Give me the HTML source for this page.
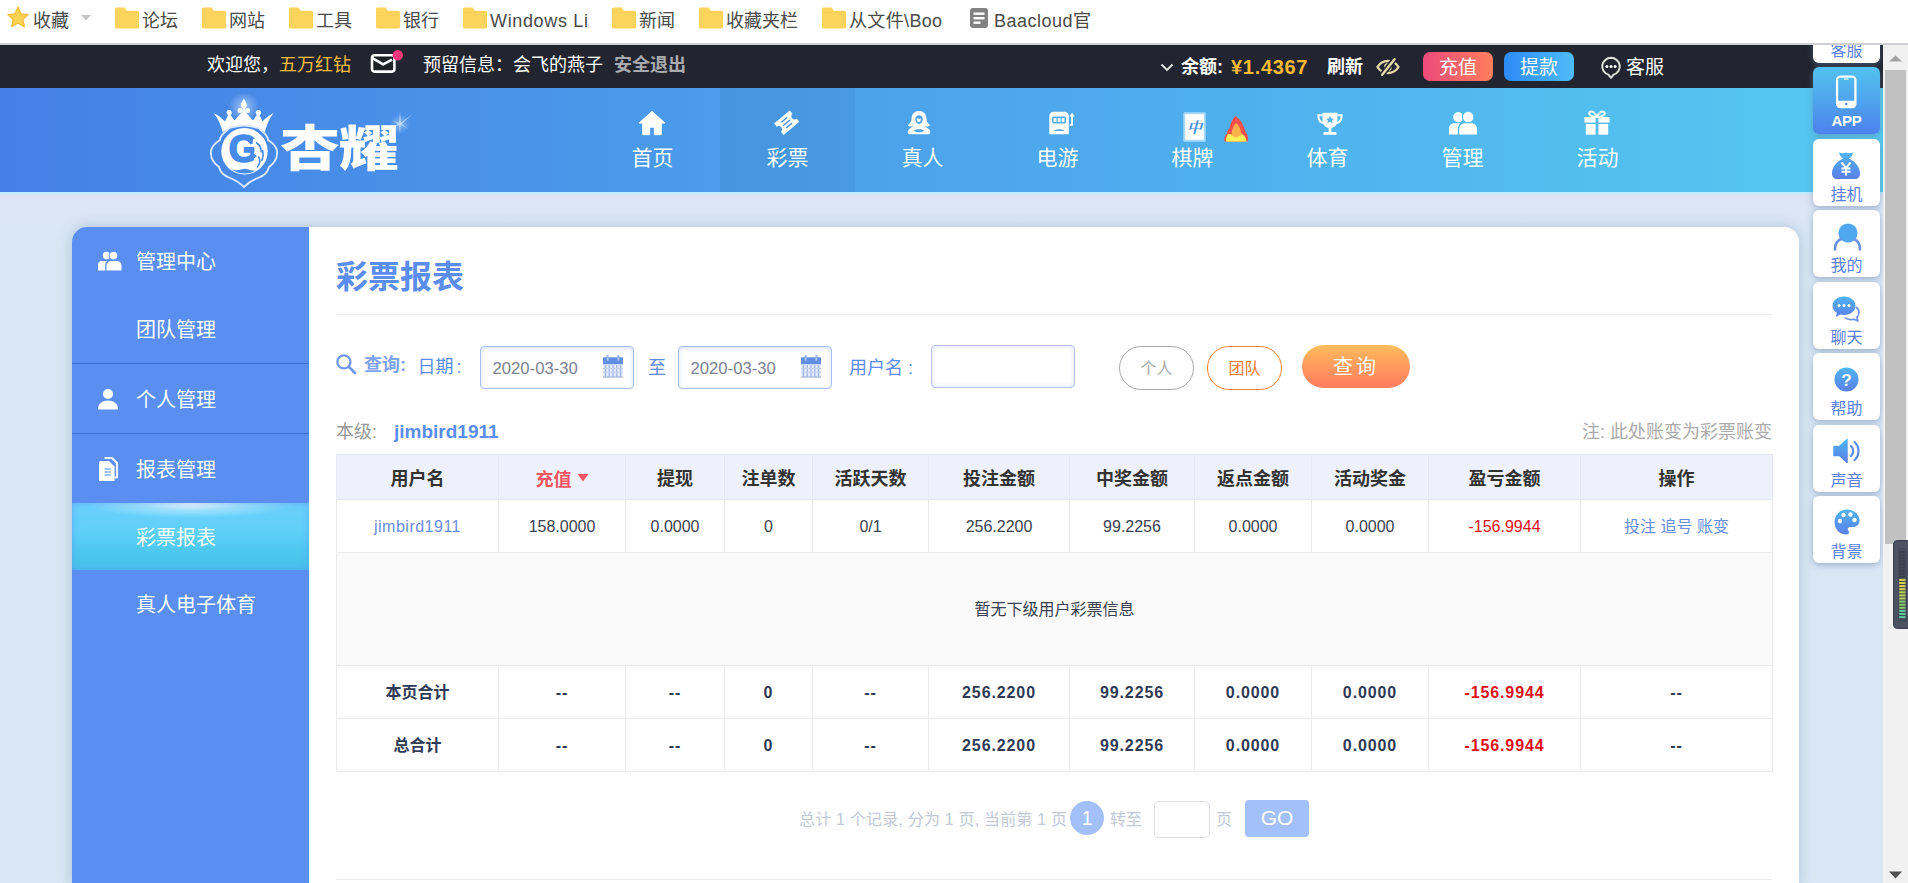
<!DOCTYPE html>
<html lang="zh-CN">
<head>
<meta charset="utf-8">
<title>彩票报表</title>
<style>
*{box-sizing:border-box;margin:0;padding:0}
html,body{width:1908px;height:883px;overflow:hidden}
body{position:relative;background:#d9e7f5;font-family:"Liberation Sans","Noto Sans CJK SC",sans-serif;color:#333;font-size:16px}
.abs{position:absolute}
/* bookmarks bar */
#bm{position:absolute;left:0;top:0;width:1908px;height:45px;background:#fff;border-bottom:2px solid #cdcfd2;z-index:50}
#bm .it{position:absolute;top:0;height:42px;line-height:42px;font-size:18px;color:#4a4a4a;white-space:nowrap}
#bm svg{position:absolute}
/* dark top bar */
#top{position:absolute;left:0;top:45px;width:1883px;height:43px;background:#22252f;color:#fff;font-size:18px;line-height:40px;white-space:nowrap}
#top span{position:absolute;top:0}
/* nav */
#nav{position:absolute;left:0;top:88px;width:1883px;height:104px;background:linear-gradient(90deg,#4580e6 0%,#55c9f1 100%)}
#nav .tab{position:absolute;top:0;height:104px;width:135px;text-align:center;color:#fff;font-size:21px}
#nav .tab .lb{position:absolute;left:0;right:0;top:56px;line-height:28px}
#nav .tab svg{position:absolute;left:50%;top:20px;margin-left:-16px}
#nav .tab.on{background:rgba(0,0,30,.045)}
/* card */
#side{position:absolute;left:72px;top:227px;width:237px;height:660px;background:#5a8ef0;border-radius:15px 0 0 0;color:#fff;font-size:20px}
#side .mi{position:absolute;left:64px;line-height:28px;white-space:nowrap}
#side .sep{position:absolute;left:0;width:237px;height:1px;background:#3f6fd0}
#side .act{position:absolute;left:0;top:276px;width:237px;height:67px;background:radial-gradient(ellipse 45% 23% at 50% 0%,rgba(255,255,255,.95) 0%,rgba(255,255,255,.35) 50%,rgba(255,255,255,0) 100%),linear-gradient(180deg,#6bd0fb 0%,#60d0f9 40%,#4cc7ee 75%,#45c2e9 100%);box-shadow:inset 0 0 7px rgba(90,142,240,.55)}
#main{position:absolute;left:309px;top:227px;width:1490px;height:660px;background:#fff;border-radius:0 15px 0 0}

#main .ttl{position:absolute;left:27px;top:27px;font-size:32px;line-height:46px;font-weight:700;color:#5b8def;white-space:nowrap}
#main .hr{position:absolute;left:27px;width:1436px;height:1px;background:#e8ebf0}
#main .q{position:absolute;white-space:nowrap;font-size:18px;line-height:28px;color:#5b8def}
#main .inp{position:absolute;height:43px;border:1px solid #a8c0f2;border-radius:4px;background:#fff;box-shadow:inset 0 2px 5px rgba(120,160,240,.22),inset 0 0 3px rgba(120,160,240,.15);font-size:16.700px;color:#7d8293;line-height:43px;padding-left:11.500px}
#main .pill{position:absolute;top:119px;width:75px;height:44px;border-radius:22px;border:1px solid #aaa;color:#aaa;font-size:16px;line-height:43px;text-align:center;background:#fff}
#tb{position:absolute;left:27px;top:227px;border-collapse:collapse;table-layout:fixed;width:1436px;font-size:16px;color:#333}
#tb td,#tb th{border:1px solid #ebebee;text-align:center;padding:0;white-space:nowrap}
#tb th{background:#eef1fc;height:45px;font-size:18px;font-weight:700;color:#333;border-color:#e6e9f5}
#tb td{height:53px;padding-top:2px;color:#3c4152}
#tb tr.tot td{font-weight:700;color:#2f3a55;letter-spacing:.9px}
#tb a{color:#6a8ee2;text-decoration:none}
#tb td.cj,#tb tr.tot td.cj{padding-top:0;padding-bottom:2px;letter-spacing:0}
#tb .red{color:#e0101a}
#pg{position:absolute;top:574px;left:0;font-size:16px;color:#c2c8d6;white-space:nowrap}
#pg span,#pg div{position:absolute}

#float{position:absolute;left:1813px;top:0;width:67px;height:600px;z-index:10}
#float .fb{position:absolute;left:0;width:67px;height:67px;background:#fff;border-radius:6px;box-shadow:0 2px 6px rgba(100,125,165,.5);color:#5b7fe2;font-size:16px;text-align:center}
#float .fb .lb{position:absolute;left:0;right:0;top:45px;line-height:22px}
#float .fb svg{position:absolute}
#sb{position:absolute;left:1883px;top:45px;width:25px;height:838px;background:#f1f1f1;z-index:20}
</style>
</head>
<body>
<div id="bm">
<svg style="left:7px;top:6px" width="22" height="23" viewBox="0 0 22 23"><path d="M11 1.2l3 6.6 7.1.8-5.3 4.9 1.5 7.1L11 17l-6.3 3.6 1.5-7.1L.9 8.6 8 7.8z" fill="#fbd456" stroke="#f3bd3c" stroke-width="1.3" stroke-linejoin="round"/></svg>
<div class="it" style="left:33px">收藏</div>
<svg style="left:81px;top:15px" width="10" height="6" viewBox="0 0 10 6"><path d="M0 0h10L5 5.5z" fill="#c4c4c4"/></svg>
<svg style="left:115px;top:7px" width="24" height="22" viewBox="0 0 24 22"><path d="M1.5 0.5h8.2l2 3.2H22.5a1.5 1.5 0 0 1 1.5 1.5V20a1.5 1.5 0 0 1-1.5 1.5h-21A1.5 1.5 0 0 1 0 20V2A1.5 1.5 0 0 1 1.5 0.5z" fill="#fbd45e"/><path d="M0 5h24v1H0z" fill="#f6c94a" opacity=".35"/></svg>
<div class="it" style="left:142px">论坛</div>
<svg style="left:202px;top:7px" width="24" height="22" viewBox="0 0 24 22"><path d="M1.5 0.5h8.2l2 3.2H22.5a1.5 1.5 0 0 1 1.5 1.5V20a1.5 1.5 0 0 1-1.5 1.5h-21A1.5 1.5 0 0 1 0 20V2A1.5 1.5 0 0 1 1.5 0.5z" fill="#fbd45e"/><path d="M0 5h24v1H0z" fill="#f6c94a" opacity=".35"/></svg>
<div class="it" style="left:229px">网站</div>
<svg style="left:289px;top:7px" width="24" height="22" viewBox="0 0 24 22"><path d="M1.5 0.5h8.2l2 3.2H22.5a1.5 1.5 0 0 1 1.5 1.5V20a1.5 1.5 0 0 1-1.5 1.5h-21A1.5 1.5 0 0 1 0 20V2A1.5 1.5 0 0 1 1.5 0.5z" fill="#fbd45e"/><path d="M0 5h24v1H0z" fill="#f6c94a" opacity=".35"/></svg>
<div class="it" style="left:316px">工具</div>
<svg style="left:376px;top:7px" width="24" height="22" viewBox="0 0 24 22"><path d="M1.5 0.5h8.2l2 3.2H22.5a1.5 1.5 0 0 1 1.5 1.5V20a1.5 1.5 0 0 1-1.5 1.5h-21A1.5 1.5 0 0 1 0 20V2A1.5 1.5 0 0 1 1.5 0.5z" fill="#fbd45e"/><path d="M0 5h24v1H0z" fill="#f6c94a" opacity=".35"/></svg>
<div class="it" style="left:403px">银行</div>
<svg style="left:463px;top:7px" width="24" height="22" viewBox="0 0 24 22"><path d="M1.5 0.5h8.2l2 3.2H22.5a1.5 1.5 0 0 1 1.5 1.5V20a1.5 1.5 0 0 1-1.5 1.5h-21A1.5 1.5 0 0 1 0 20V2A1.5 1.5 0 0 1 1.5 0.5z" fill="#fbd45e"/><path d="M0 5h24v1H0z" fill="#f6c94a" opacity=".35"/></svg>
<div class="it" style="left:490px;letter-spacing:.65px">Windows Li</div>
<svg style="left:612px;top:7px" width="24" height="22" viewBox="0 0 24 22"><path d="M1.5 0.5h8.2l2 3.2H22.5a1.5 1.5 0 0 1 1.5 1.5V20a1.5 1.5 0 0 1-1.5 1.5h-21A1.5 1.5 0 0 1 0 20V2A1.5 1.5 0 0 1 1.5 0.5z" fill="#fbd45e"/><path d="M0 5h24v1H0z" fill="#f6c94a" opacity=".35"/></svg>
<div class="it" style="left:639px">新闻</div>
<svg style="left:699px;top:7px" width="24" height="22" viewBox="0 0 24 22"><path d="M1.5 0.5h8.2l2 3.2H22.5a1.5 1.5 0 0 1 1.5 1.5V20a1.5 1.5 0 0 1-1.5 1.5h-21A1.5 1.5 0 0 1 0 20V2A1.5 1.5 0 0 1 1.5 0.5z" fill="#fbd45e"/><path d="M0 5h24v1H0z" fill="#f6c94a" opacity=".35"/></svg>
<div class="it" style="left:726px">收藏夹栏</div>
<svg style="left:822px;top:7px" width="24" height="22" viewBox="0 0 24 22"><path d="M1.5 0.5h8.2l2 3.2H22.5a1.5 1.5 0 0 1 1.5 1.5V20a1.5 1.5 0 0 1-1.5 1.5h-21A1.5 1.5 0 0 1 0 20V2A1.5 1.5 0 0 1 1.5 0.5z" fill="#fbd45e"/><path d="M0 5h24v1H0z" fill="#f6c94a" opacity=".35"/></svg>
<div class="it" style="left:849px;letter-spacing:.35px">从文件\Boo</div>
<svg style="left:970px;top:8px" width="18" height="20" viewBox="0 0 18 20"><rect x="0" y="0" width="18" height="20" rx="3" fill="#828282"/><rect x="3.5" y="4.5" width="11" height="2.4" fill="#fff"/><rect x="3.5" y="9" width="11" height="2.4" fill="#fff"/><rect x="3.5" y="13.5" width="7" height="2.4" fill="#fff"/></svg>
<div class="it" style="left:994px;letter-spacing:.5px">Baacloud官</div>
</div>
<div id="top">
<span style="left:207px">欢迎您，<b style="font-weight:400;color:#fbbd3e">五万红钻</b></span>
<svg class="abs" style="left:370px;top:4px" width="36" height="28" viewBox="0 0 36 28"><rect x="2" y="6.200" width="22.400" height="16.400" rx="2.500" fill="#1e2223" stroke="#fff" stroke-width="2.600"/><path d="M2.500 9.200L13.100 15.400L22 10.600" fill="none" stroke="#fff" stroke-width="2.600" stroke-linejoin="round"/><circle cx="27.800" cy="6.300" r="5.200" fill="#f9377d"/></svg>
<span style="left:423px">预留信息：会飞的燕子</span>
<span style="left:614px;font-weight:700;color:#a9abb0">安全退出</span>
<svg class="abs" style="left:1160px;top:18px" width="14" height="9" viewBox="0 0 14 9"><path d="M1.5 1.5l5.5 5.5 5.5-5.5" fill="none" stroke="#e8e8e8" stroke-width="1.8"/></svg>
<span style="left:1181px;top:2px;font-weight:700">余额:</span>
<span style="left:1231px;top:2px;font-weight:700;color:#fdb933;font-size:20px;letter-spacing:.7px">¥1.4367</span>
<span style="left:1327px;top:2px;font-weight:700">刷新</span>
<svg class="abs" style="left:1376px;top:13px" width="24" height="18" viewBox="0 0 24 18"><path d="M1.500 9C4 4.800 8 3 12 3S20 4.800 22.500 9C20 13.200 16 15 12 15S4 13.200 1.500 9z" fill="none" stroke="#e6d9a8" stroke-width="2.400"/><circle cx="12" cy="9" r="2.800" fill="none" stroke="#e6d9a8" stroke-width="2.200"/><path d="M18.500 1L6 17" stroke="#22252f" stroke-width="5.500"/><path d="M18.500 1.200L6.200 16.800" stroke="#e6d9a8" stroke-width="2.400" stroke-linecap="round"/></svg>
<div class="abs" style="left:1423px;top:7px;width:70px;height:29px;border-radius:7px;background:linear-gradient(90deg,#ec4b7a,#ff7e5c);text-align:center;line-height:31px;font-size:19px">充值</div>
<div class="abs" style="left:1504px;top:7px;width:70px;height:29px;border-radius:7px;background:linear-gradient(90deg,#2c8af6,#4fbbf8);text-align:center;line-height:31px;font-size:19px">提款</div>
<svg class="abs" style="left:1600px;top:11px" width="22" height="24" viewBox="0 0 22 24"><path d="M11 1.800a8.800 8.600 0 0 1 2.600 16.800L11 21.800 8.400 18.600A8.800 8.600 0 0 1 11 1.800z" fill="none" stroke="#e2e2dc" stroke-width="2" stroke-linejoin="round"/><circle cx="6.900" cy="10.400" r="1.500" fill="#fff"/><circle cx="11" cy="10.400" r="1.500" fill="#fff"/><circle cx="15.100" cy="10.400" r="1.500" fill="#fff"/></svg>
<span style="left:1626px;top:3px;font-size:19px">客服</span>
</div>
<div class="abs" style="left:0;top:192px;width:1883px;height:36px;background:linear-gradient(180deg,#c2edfc 0,#c2edfc 2px,#dde3f5 3px,#dbe5f5 14px,#d9e7f5 36px)"></div>
<div id="nav">
<svg class="abs" style="left:205px;top:6px" width="78" height="96" viewBox="0 0 78 96">
<defs><radialGradient id="glow"><stop offset="0" stop-color="#fff" stop-opacity=".5"/><stop offset="1" stop-color="#fff" stop-opacity="0"/></radialGradient></defs>
<circle cx="38.800" cy="13" r="15" fill="url(#glow)"/>
<path d="M38.800 4.500c1.200 2.600 3 4.300 3 6.800c0 1.400-.7 2.400-1.800 2.900l.6 4.300h-3.600l.6-4.300c-1.100-.5-1.800-1.500-1.800-2.900c0-2.500 1.800-4.200 3-6.800z" fill="#fff"/>
<circle cx="35" cy="16.500" r="2.500" fill="#fff"/><circle cx="42.600" cy="16.500" r="2.500" fill="#fff"/>
<path d="M8.600 19C13 21 17 24 20 27.500L24.200 18.700L29.500 26.500L38.800 16L48 26.500L53.400 18.700L57.500 27.500C60.500 24 64.500 21 68.600 19C64 25 61.500 31 60 38Q38.800 25.500 17.500 38C16 31 13.500 25 8.600 19Z" fill="#fff"/>
<circle cx="24.200" cy="18.500" r="2.600" fill="#fff"/><circle cx="53.400" cy="18.500" r="2.600" fill="#fff"/>
<path d="M39 31.500C45 31.500 49 33.500 53 33.500C57 38 63 40 63 46C68 49 73 54 72 60C72 66 68 70 64 73C63 79 58 82 53 84C48 86 43 89 39 93C35 89 30 86 25 84C20 82 15 79 14 73C10 70 6 66 6 60C5 54 10 49 15 46C15 40 21 38 25 33.500C29 33.500 33 31.500 39 31.500Z" fill="none" stroke="#dcebff" stroke-width="1.800"/>
<circle cx="39.500" cy="57.300" r="23.200" fill="#fff"/>
<text x="38.500" y="68.200" font-size="38" font-weight="700" text-anchor="middle" fill="#478bea" stroke="#478bea" stroke-width="1.600" font-family="'Liberation Sans',sans-serif">G</text>
<path d="M48.500 45C53 44 58.500 47 61 52.500C63 57.500 62 64 59 69C56 73 52 75.500 48 76.500C50 72.500 50.500 68.500 49 64.500L52 62L49 60C50 56.500 49.500 53 48 50.500C47.500 48.500 47.500 46.500 48.500 45Z" fill="#fff"/>
<path d="M51 48.500C54.500 50.500 56.500 54 56 58.500M53.500 62.500C55.500 66 55 70 52 73.500M57.500 56C58.500 60 58 64 56.500 67" fill="none" stroke="#478bea" stroke-width="1.600"/>
<path d="M27 75.500C31 78.500 35.500 79.500 40 79.500C44 79.500 47.500 78.500 51 76.500C48 77 45.500 76.500 43.500 75.500C41 74.500 38.500 74.500 36 75.500C33 76.500 30 76.500 27 75.500Z" fill="#478bea"/>
</svg>
<div class="abs" style="left:280px;top:31px;width:120px;height:60px;line-height:60px;font-size:50px;font-weight:900;color:#fff;white-space:nowrap;transform-origin:0 50%;transform:scale(1.2,.98);letter-spacing:-1px">杏耀</div>
<svg class="abs" style="left:380px;top:16px" width="40" height="40" viewBox="0 0 40 40"><circle cx="20" cy="20" r="10" fill="url(#glow)" opacity=".7"/><path d="M20 6l.8 13 13-10-12.300 11 7 5-8-4.200-.5 10-.8-10-8 4.200 7-5-6-3.500 7 2.500z" fill="#fff" opacity=".55"/></svg>
<div class="tab" style="left:585px"><svg width="28" height="26.1" style="left:52.5px;top:22px;margin-left:0" viewBox="0 0 30 28"><path d="M15 1.500L1 14h4v12.500h7.500v-8h5v8H25V14h4z" fill="#fff" stroke="#fff" stroke-width="1" stroke-linejoin="round"/></svg><div class="lb">首页</div></div>
<div class="tab on" style="left:720px"><svg width="28" height="26.1" style="left:53.0px;top:22px;margin-left:0" viewBox="0 0 30 28"><g transform="rotate(-40 15 14)"><path d="M4 5.500h22v4.600a3.400 3.400 0 0 0 0 6.800v4.600H4v-4.600a3.400 3.400 0 0 0 0-6.800z" fill="#fff"/><path d="M11 9.500l8 0M10 13.500l10 0M11 17.500l8 0" stroke="#4a97e6" stroke-width="1.500"/></g></svg><div class="lb">彩票</div></div>
<div class="tab" style="left:855px"><svg width="28" height="26.1" style="left:49.5px;top:22px;margin-left:0" viewBox="0 0 30 28"><path d="M15 1c5 0 8 3.500 8 8.500c0 3 1.500 5 4 7c-2 1.500-4.500 1.500-6 1c2 1.500 5 2.500 6 5.500c.5 1.800-.5 3-2 3H5c-1.500 0-2.500-1.200-2-3c1-3 4-4 6-5.500c-1.500.5-4 .5-6-1c2.500-2 4-4 4-7C7 4.500 10 1 15 1z" fill="#fff"/><path d="M15 5.500c-2.500 0-4 2-4 4.500s1.700 5 4 5s4-2.500 4-5s-1.500-4.500-4-4.500z" fill="#4ba2ea"/><path d="M12.500 8.500c1 .8 2.500 1 4.500.5c.3 2-.6 4-2 4s-2.500-1.500-2.500-4.500z" fill="#fff"/><path d="M9.500 22c2 1.500 3.500 2 5.500 2s3.500-.5 5.500-2c-1.500-.8-3.500-1.300-5.500-1.300s-4 .5-5.500 1.300z" fill="#4ba2ea"/></svg><div class="lb">真人</div></div>
<div class="tab" style="left:990px"><svg width="29.7" height="26" style="left:57.1px;top:22px;margin-left:0" viewBox="0 0 32 28"><path d="M7 2h12a4.500 4.500 0 0 1 4.500 4.500V26H2.500V6.500A4.500 4.500 0 0 1 7 2z" fill="#fff"/><rect x="5.500" y="7" width="15" height="7.500" rx="1.500" fill="#4eacec"/><rect x="7.200" y="8.600" width="3" height="4.400" fill="#fff"/><rect x="11.500" y="8.600" width="3" height="4.400" fill="#fff"/><rect x="15.800" y="8.600" width="3" height="4.400" fill="#fff"/><path d="M7 22.500c3-2.500 9-2.500 12 0z" fill="#4eacec"/><path d="M24.500 16h2.500V6.500" fill="none" stroke="#fff" stroke-width="2"/><path d="M24 7l3-4 3 4z" fill="#fff"/></svg><div class="lb">电游</div></div>
<div class="tab" style="left:1125px"><svg width="23" height="30" style="left:57.500px;top:23.500px;margin-left:0" viewBox="0 0 23 30"><rect x="0.300" y="0.300" width="22.400" height="29.400" rx="1.200" fill="#a9dafa"/><rect x="2.200" y="2.200" width="18.600" height="25.600" rx=".8" fill="#fff"/><text x="11.500" y="20.500" font-size="15" font-weight="700" font-style="italic" text-anchor="middle" fill="#4b92de" font-family="'Liberation Serif','Noto Serif CJK SC',serif">中</text></svg><div class="lb">棋牌</div></div>
<div class="tab" style="left:1260px"><svg width="30" height="26.2" style="left:54.5px;top:22.5px;margin-left:0" viewBox="0 0 32 28"><path d="M8 2h16v8c0 5-3.500 8.500-8 8.500S8 15 8 10z" fill="#fff"/><path d="M8 4.500H3.500c0 5 2 8 6 8.500M24 4.500h4.500c0 5-2 8-6 8.500" fill="none" stroke="#fff" stroke-width="2.200"/><path d="M14.500 18h3v4.500h-3z" fill="#fff"/><path d="M10.500 22.500h11c.8 0 1.500.7 1.500 1.500v1.500H9V24c0-.8.700-1.500 1.500-1.500z" fill="#fff"/><path d="M16 5.200l1.300 2.700 2.900.3-2.200 2 .7 2.900-2.700-1.500-2.700 1.500.7-2.900-2.200-2 2.900-.3z" fill="#50b4ee"/></svg><div class="lb">体育</div></div>
<div class="tab" style="left:1395px"><svg width="32" height="26.3" style="left:52.0px;top:22px;margin-left:0" viewBox="0 0 34 28"><circle cx="12" cy="7.500" r="5.500" fill="#fff"/><circle cx="22.500" cy="7.500" r="6.200" fill="#fff" stroke="#52bcef" stroke-width="1.200"/><path d="M2 26v-6.500c0-3 2.500-5.500 5.500-5.500H14c-1.500 1.500-2.500 3.500-2.500 6v6z" fill="#fff"/><path d="M13 26v-6c0-3.300 2.700-6 6-6h7c3.300 0 6 2.700 6 6v6z" fill="#fff"/></svg><div class="lb">管理</div></div>
<div class="tab" style="left:1530px"><svg width="28" height="26.1" style="left:53.0px;top:22px;margin-left:0" viewBox="0 0 30 28"><path d="M15 7.500C13 3 10 .5 7.500 2S7 7 15 7.500zM15 7.500C17 3 20 .5 22.500 2S23 7 15 7.500z" fill="none" stroke="#fff" stroke-width="2"/><rect x="1.500" y="7.500" width="12" height="6" fill="#fff"/><rect x="16.500" y="7.500" width="12" height="6" fill="#fff"/><rect x="3" y="15" width="10.500" height="11.500" fill="#fff"/><rect x="16.500" y="15" width="10.500" height="11.500" fill="#fff"/></svg><div class="lb">活动</div></div>
<svg class="abs" style="left:1223.500px;top:26.500px" width="24.500" height="27" viewBox="0 0 24 26"><path d="M11.500 .5C13.500 3 17 5 18.500 9.500C19.500 11.500 20.500 13 20.800 16C22.800 18 24.200 22 23.500 25.800H.6C-.2 22.500 1 19.500 3 18C3 15.500 4 14 5.500 13C6 8 8.500 3.500 11.500 .5z" fill="#f5504c"/><path d="M12 7.500C14.500 10 16.500 13 16.500 17C18 17.500 19 19 19 21L20 25.800H3.500L4.500 20C5 18.500 6.500 18 7.500 18.500C7.500 13.500 9.500 10 12 7.500z" fill="#fcb04c"/><path d="M4 18.500C6 18 7.500 20 9.500 21C11.500 22 14 21 15.500 20C17.500 18.500 19.500 19 20.500 21C21.500 22.500 22 24 22 25.800H2C1.800 23 2.500 20 4 18.500z" fill="#fff157"/></svg>
</div>
<div class="abs" style="left:72px;top:227px;width:1727px;height:660px;border-radius:15px 15px 0 0;box-shadow:0 0 14px rgba(80,110,150,.3)"></div>
<div id="side">
<div class="act"></div>
<div class="sep" style="top:136px"></div><div class="sep" style="top:206px"></div>
<svg class="abs" style="left:25px;top:24px" width="26" height="20" viewBox="0 0 26 20"><circle cx="9.500" cy="4.500" r="3.700" fill="#fff"/><circle cx="16.500" cy="4.600" r="4.300" fill="#fff" stroke="#5a8ef0" stroke-width="1"/><path d="M1 19.500v-6c0-2 1.600-3.600 3.600-3.600H10c-1 1-1.800 2.500-1.800 4.200v5.400z" fill="#fff"/><path d="M9.500 19.500v-5c0-2.500 2-4.500 4.500-4.500h6c2.500 0 4.500 2 4.500 4.500v5z" fill="#fff"/></svg>
<svg class="abs" style="left:25px;top:161px" width="22" height="22" viewBox="0 0 22 22"><circle cx="11" cy="6" r="5" fill="#fff"/><path d="M1 21c0-5 4-8.500 10-8.500s10 3.500 10 8.500c0 .3-.2.500-.5.500h-19c-.3 0-.5-.2-.5-.500z" fill="#fff"/></svg>
<svg class="abs" style="left:25px;top:229px" width="24" height="26" viewBox="0 0 24 26"><path d="M7.500 2h7.500l5 5V21.500h-3" fill="none" stroke="#eef3ff" stroke-width="2.200" stroke-linejoin="round"/><path d="M4 5h8l5.500 5.500V25H2V7a2 2 0 0 1 2-2z" fill="#fff"/><path d="M7.500 13h6.500M7.500 16h6.500M7.500 19h6.500" stroke="#8fb0f3" stroke-width="1.500"/></svg>
<div class="mi" style="top:21px">管理中心</div>
<div class="mi" style="top:89px">团队管理</div>
<div class="mi" style="top:159px">个人管理</div>
<div class="mi" style="top:229px">报表管理</div>
<div class="mi" style="top:297px">彩票报表</div>
<div class="mi" style="top:364px">真人电子体育</div>
</div>
<div id="main">
<div class="ttl">彩票报表</div>
<div class="hr" style="top:87px"></div>
<div class="hr" style="top:652px"></div>
<svg class="abs" style="left:26px;top:126px" width="22.500" height="22.500" viewBox="0 0 24 24"><circle cx="9.500" cy="9.500" r="7" fill="none" stroke="#6f98ea" stroke-width="2.400"/><path d="M14.800 14.800l6.500 6.500" stroke="#6f98ea" stroke-width="3" stroke-linecap="round"/></svg>
<div class="q" style="left:55px;top:124px;font-weight:700;color:#7ea2ec">查询:</div>
<div class="q" style="left:108.500px;top:126px">日期<span style="margin-left:3px">:</span></div>
<div class="inp" style="left:171px;top:119px;width:154px">2020-03-30<svg class="abs" style="right:10.500px;top:7.500px" width="20" height="23" viewBox="0 0 20 23"><rect x="3.600" y="0" width="2" height="6" rx=".8" fill="#8eb0ee"/><rect x="14.400" y="0" width="2" height="6" rx=".8" fill="#8eb0ee"/><rect x="0" y="2.300" width="20" height="7.200" fill="#5f8fe2"/><rect x="3.600" y="2.300" width="2" height="3.500" fill="#a9c4f4"/><rect x="14.400" y="2.300" width="2" height="3.500" fill="#a9c4f4"/><rect x="0" y="9.500" width="20" height="13" fill="#e1e9fb"/><path d="M2.500 10v12M6.250 10v12M10 10v12M13.750 10v12M17.500 10v12" stroke="#9db6ea" stroke-width="1.200"/><path d="M0 13.500h20M0 17.300h20" stroke="#c3d2f3" stroke-width="1"/><path d="M0 22h20" stroke="#a9b7d6" stroke-width="1.200"/></svg></div>
<div class="q" style="left:339px;top:127px;color:#6488dc">至</div>
<div class="inp" style="left:369px;top:119px;width:154px">2020-03-30<svg class="abs" style="right:10.500px;top:7.500px" width="20" height="23" viewBox="0 0 20 23"><rect x="3.600" y="0" width="2" height="6" rx=".8" fill="#8eb0ee"/><rect x="14.400" y="0" width="2" height="6" rx=".8" fill="#8eb0ee"/><rect x="0" y="2.300" width="20" height="7.200" fill="#5f8fe2"/><rect x="3.600" y="2.300" width="2" height="3.500" fill="#a9c4f4"/><rect x="14.400" y="2.300" width="2" height="3.500" fill="#a9c4f4"/><rect x="0" y="9.500" width="20" height="13" fill="#e1e9fb"/><path d="M2.500 10v12M6.250 10v12M10 10v12M13.750 10v12M17.500 10v12" stroke="#9db6ea" stroke-width="1.200"/><path d="M0 13.500h20M0 17.300h20" stroke="#c3d2f3" stroke-width="1"/><path d="M0 22h20" stroke="#a9b7d6" stroke-width="1.200"/></svg></div>
<div class="q" style="left:540px;top:126.500px">用户名<span style="margin-left:5px">:</span></div>
<div class="inp" style="left:622px;top:118px;width:144px;height:43px;border-color:#b9c3ee;box-shadow:inset 0 0 5px rgba(130,140,230,.3)"></div>
<div class="pill" style="left:810px">个人</div>
<div class="pill" style="left:898px;border-color:#f0843c;color:#ef7a33">团队</div>
<div class="abs" style="left:993px;top:118px;width:108px;height:43px;border-radius:22px;background:linear-gradient(180deg,#ffbc5c 0%,#ff9a5e 50%,#ff7c60 100%);color:#fff;font-size:20px;line-height:45px;text-align:center;letter-spacing:3px;padding-left:0">查询</div>
<div class="q" style="left:27px;top:191px;color:#999">本级:</div>
<div class="q" style="left:85px;top:191px;font-weight:700;font-size:19px">jimbird1911</div>
<div class="q" style="right:27px;top:191px;color:#ababab">注: 此处账变为彩票账变</div>
<table id="tb"><colgroup><col style="width:162px"><col style="width:127px"><col style="width:99px"><col style="width:88px"><col style="width:116px"><col style="width:141px"><col style="width:125px"><col style="width:117px"><col style="width:117px"><col style="width:152px"><col style="width:192px"></colgroup><tr><th>用户名</th><th><span style="color:#f25561;position:relative;top:1px">充值 <svg width="12" height="8" viewBox="0 0 12 8" style="position:relative;top:-4px;left:0"><path d="M0.500 0h11L6 7.500z" fill="#f25561"/></svg></span></th><th>提现</th><th>注单数</th><th>活跃天数</th><th>投注金额</th><th>中奖金额</th><th>返点金额</th><th>活动奖金</th><th>盈亏金额</th><th>操作</th></tr><tr><td><a style="letter-spacing:.5px">jimbird1911</a></td><td>158.0000</td><td>0.0000</td><td>0</td><td>0/1</td><td>256.2200</td><td>99.2256</td><td>0.0000</td><td>0.0000</td><td><span class="red">-156.9944</span></td><td class="cj"><a>投注 追号 账变</a></td></tr><tr><td colspan="11" class="cj" style="padding-bottom:3px;height:113px;background:#fafafa;font-size:16px;color:#3a3f52">暂无下级用户彩票信息</td></tr><tr class="tot"><td class="cj">本页合计</td><td>--</td><td>--</td><td>0</td><td>--</td><td>256.2200</td><td>99.2256</td><td>0.0000</td><td>0.0000</td><td><span class="red">-156.9944</span></td><td>--</td></tr><tr class="tot"><td class="cj">总合计</td><td>--</td><td>--</td><td>0</td><td>--</td><td>256.2200</td><td>99.2256</td><td>0.0000</td><td>0.0000</td><td><span class="red">-156.9944</span></td><td>--</td></tr></table>
<div id="pg"><span style="left:490px;top:8px;line-height:22px;letter-spacing:.2px">总计 1 个记录, 分为 1 页, 当前第 1 页</span><div style="left:761px;top:0;width:34px;height:34px;border-radius:17px;background:#a3c0fa;color:#fff;font-size:20px;line-height:34px;text-align:center">1</div><span style="left:801px;top:8px;line-height:22px">转至</span><div style="left:845px;top:0;width:56px;height:37px;border:1px solid #dcdfe6;border-radius:5px;background:#fff"></div><span style="left:907px;top:8px;line-height:22px">页</span><div style="left:936px;top:-1px;width:64px;height:37px;border-radius:4px;background:#a3c0fa;color:#fff;font-size:21px;line-height:36px;text-align:center">GO</div></div>
</div>
<div id="float">
<svg width="0" height="0" style="position:absolute"><defs><linearGradient id="bg1" x1="0" y1="0" x2="0" y2="1"><stop offset="0" stop-color="#4fb4f2"/><stop offset="1" stop-color="#5a7fe8"/></linearGradient></defs></svg>
<div class="fb" style="top:-4px"><div class="lb" style="top:44px">客服</div></div>
<div class="fb" style="top:67px;background:linear-gradient(180deg,#52c2f0 0%,#4fa4ee 50%,#4c82ec 100%);color:#fff;font-weight:700"><svg style="left:21.500px;top:8px" width="22.500" height="33.700" viewBox="0 0 24 36"><rect x="2.200" y="1.700" width="19.600" height="32.600" rx="3.500" fill="none" stroke="#fff" stroke-width="2.400"/><path d="M2.500 27.500h19v4a3 3 0 0 1-3 3h-13a3 3 0 0 1-3-3z" fill="#fff"/><circle cx="12" cy="31" r="1.300" fill="#4c8cec"/><path d="M9.500 4.300h5" stroke="#fff" stroke-width="1.200"/></svg><div class="lb" style="top:43px;font-size:15px;letter-spacing:-.2px">APP</div></div>
<div class="fb" style="top:138.5px"><svg style="left:18px;top:12px" width="30" height="29" viewBox="0 0 30 29"><path d="M8 1.500c2.500 1 4.500 1 7 0c2.500 1 4.500 1 7 0c-.5 3-2 5-4.500 6C24 10 29 16 29 22.500c0 3.500-2 5.500-5 5.500H6c-3 0-5-2-5-5.500C1 16 6 10 12.500 7.500C10 6.500 8.500 4.500 8 1.500z" fill="url(#bg1)"/><path d="M10.500 11.500l4.500 5.500 4.500-5.500M10.500 17.500h9M10.500 20.800h9M15 17v7.500" fill="none" stroke="#fff" stroke-width="2"/></svg><div class="lb">挂机</div></div>
<div class="fb" style="top:210px"><svg style="left:19px;top:10px" width="30" height="32" viewBox="0 0 30 32"><path d="M3 29.500c0-7 4-11.500 12.500-11.500s12.500 4.500 12.500 11.500" fill="none" stroke="#6a8fe4" stroke-width="2.600" stroke-linecap="round"/><circle cx="16" cy="13" r="9.600" fill="#50a6ef"/></svg><div class="lb">我的</div></div>
<div class="fb" style="top:281.5px"><svg style="left:17px;top:12px" width="32" height="28" viewBox="0 0 32 28"><path d="M26 13c2 1.500 3 3.500 3 5.500c0 2-.8 3.500-2.200 4.800L28 27l-4-1.800c-3 .8-7 .3-9.500-1.700" fill="none" stroke="#6b8fe6" stroke-width="1.600" stroke-linejoin="round"/><path d="M14 2.500c6.500 0 11.500 4 11.500 9.300S20.500 21 14 21c-1.300 0-2.600-.2-3.800-.5L6 23l.8-4.200C4.200 17.200 2.500 14.700 2.500 11.800C2.500 6.500 7.500 2.500 14 2.500z" fill="url(#bg1)"/><circle cx="9" cy="11.500" r="1.500" fill="#fff"/><circle cx="14" cy="11.500" r="1.500" fill="#fff"/><circle cx="19" cy="11.500" r="1.500" fill="#fff"/></svg><div class="lb">聊天</div></div>
<div class="fb" style="top:353px"><svg style="left:21px;top:14px" width="25" height="25" viewBox="0 0 25 25"><circle cx="12.500" cy="12.500" r="12" fill="url(#bg1)"/><text x="12.500" y="18.500" font-size="17" font-weight="700" fill="#fff" text-anchor="middle" font-family="'Liberation Sans',sans-serif">?</text></svg><div class="lb">帮助</div></div>
<div class="fb" style="top:425px"><svg style="left:19px;top:12px" width="30" height="28" viewBox="0 0 30 28"><path d="M2 9.500h5.500L15 2.500v23L7.500 18.500H2z" fill="url(#bg1)" stroke="url(#bg1)" stroke-width="1.500" stroke-linejoin="round"/><path d="M19 9c1.500 1.300 2.200 3 2.200 5s-.7 3.700-2.200 5" fill="none" stroke="#5a8cea" stroke-width="2.200" stroke-linecap="round"/><path d="M22.500 5c2.700 2.300 4 5.500 4 9s-1.300 6.700-4 9" fill="none" stroke="#5a8cea" stroke-width="2.200" stroke-linecap="round"/></svg><div class="lb">声音</div></div>
<div class="fb" style="top:496px"><svg style="left:20px;top:12px" width="28" height="28" viewBox="0 0 28 28"><path d="M14 1.500c7 0 12.500 5 12.500 11c0 4-3 6.500-6.500 6.500h-3c-1.500 0-2.300 1-2.300 2c0 1.500 1.300 2 1.300 3.500c0 1.300-1 2-2.500 2C6.500 26.500 1.500 21 1.500 14S7 1.500 14 1.500z" fill="url(#bg1)"/><circle cx="7" cy="13" r="2.200" fill="#fff"/><circle cx="10.500" cy="7" r="2.200" fill="#fff"/><circle cx="17.500" cy="6.500" r="2.200" fill="#fff"/><circle cx="21.500" cy="12" r="2.200" fill="#fff"/></svg><div class="lb">背景</div></div>
</div>
<div id="sb">
<svg class="abs" style="left:6px;top:10px" width="13" height="7" viewBox="0 0 13 7"><path d="M0 6.500L6.500 0.500L13 6.500z" fill="#a3a3a3"/></svg>
<div class="abs" style="left:2px;top:25px;width:21px;height:474px;background:#c1c1c1"></div>
<svg class="abs" style="left:6px;top:826px" width="13" height="8" viewBox="0 0 13 8"><path d="M0 0.500h13L6.500 7.500z" fill="#505050"/></svg>
<svg class="abs" style="left:10px;top:495px" width="15" height="89" viewBox="0 0 15 89"><path d="M4.500 0H15v89H4.500A4.500 4.500 0 0 1 0 84.500V4.500A4.500 4.500 0 0 1 4.500 0z" fill="#3f4352"/><path d="M5 1.200H15v86.600H5A3.800 3.800 0 0 1 1.200 84V5A3.800 3.800 0 0 1 5 1.200z" fill="#4e5364"/><rect x="5" y="8" width="9" height="74" rx="1" fill="#454a59"/><rect x="6.200" y="11.0" width="6.300" height="2" fill="#3b404e"/><rect x="6.200" y="14.1" width="6.300" height="2" fill="#3b404e"/><rect x="6.200" y="17.2" width="6.300" height="2" fill="#3b404e"/><rect x="6.200" y="20.3" width="6.300" height="2" fill="#3b404e"/><rect x="6.200" y="23.4" width="6.300" height="2" fill="#3b404e"/><rect x="6.200" y="26.5" width="6.300" height="2" fill="#3b404e"/><rect x="6.200" y="29.6" width="6.300" height="2" fill="#3b404e"/><rect x="6.200" y="32.7" width="6.300" height="2" fill="#3b404e"/><rect x="6.200" y="35.8" width="6.300" height="2" fill="#3b404e"/><rect x="6.200" y="38.9" width="6.300" height="2" fill="#d9d04c"/><rect x="6.200" y="42.0" width="6.300" height="2" fill="#d9d04c"/><rect x="6.200" y="45.1" width="6.300" height="2" fill="#d9d04c"/><rect x="6.200" y="48.2" width="6.300" height="2" fill="#d9d04c"/><rect x="6.200" y="51.3" width="6.300" height="2" fill="#b5d455"/><rect x="6.200" y="54.4" width="6.300" height="2" fill="#b5d455"/><rect x="6.200" y="57.5" width="6.300" height="2" fill="#b5d455"/><rect x="6.200" y="60.6" width="6.300" height="2" fill="#86d06e"/><rect x="6.200" y="63.7" width="6.300" height="2" fill="#86d06e"/><rect x="6.200" y="66.8" width="6.300" height="2" fill="#86d06e"/><rect x="6.200" y="69.9" width="6.300" height="2" fill="#5cc8a0"/><rect x="6.200" y="73.0" width="6.300" height="2" fill="#5cc8a0"/><rect x="6.200" y="76.1" width="6.300" height="2" fill="#5cc8a0"/></svg>
</div>
</body>
</html>
